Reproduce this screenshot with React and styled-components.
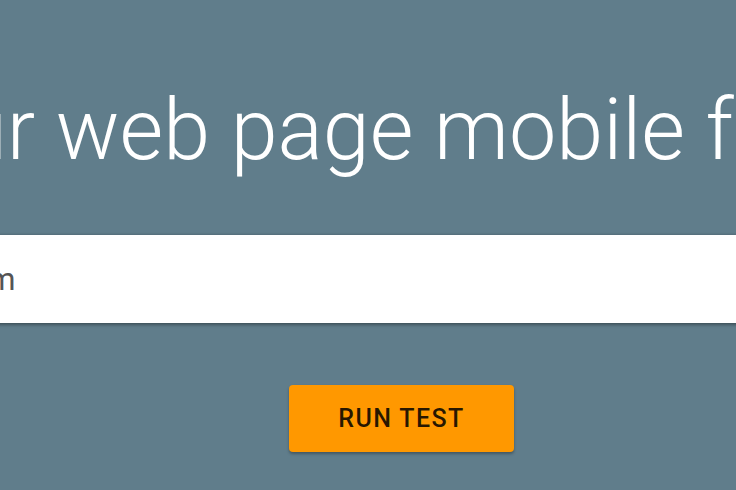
import styled, { createGlobalStyle } from "styled-components";

const GlobalStyle = createGlobalStyle`
  html, body {
    margin: 0;
    padding: 0;
    background-color: #607d8b;
    overflow: hidden;
  }
`;

const App = () => {
  return (
    <>
      <GlobalStyle />
      <Page>
        <Heading>Is your web page mobile friendly?</Heading>
        <UrlInput type="text" defaultValue="https://example.com" />
        <RunButton>RUN TEST</RunButton>
      </Page>
    </>
  );
};

const Page = styled.div`
  display: flex;
  flex-direction: column;
  align-items: center;
  box-sizing: border-box;
  width: 736px;
  height: 490px;
  padding-left: 67px;
  padding-top: 81px;
  overflow: hidden;
  font-family: Roboto, "Liberation Sans", sans-serif;
`;

const Heading = styled.h1`
  margin: 0;
  flex-shrink: 0;
  white-space: nowrap;
  font-size: 84.5px;
  line-height: 100px;
  font-weight: 300;
  color: #ffffff;
`;

const UrlInput = styled.input`
  flex-shrink: 0;
  box-sizing: border-box;
  width: 1600px;
  height: 88px;
  margin-top: 54px;
  padding: 0 0 0 127px;
  border: none;
  outline: none;
  background-color: #ffffff;
  box-shadow: 0 2px 3px rgba(0, 0, 0, 0.35), 0 -1px 2px rgba(0, 0, 0, 0.12);
  font-family: Roboto, "Liberation Sans", sans-serif;
  font-size: 31px;
  color: #555555;
`;

const RunButton = styled.button`
  flex-shrink: 0;
  width: 225px;
  height: 67px;
  margin-top: 62px;
  border: none;
  border-radius: 4px;
  background-color: #ff9800;
  box-shadow: 0 2px 3px rgba(0, 0, 0, 0.3);
  font-family: Roboto, "Liberation Sans", sans-serif;
  font-size: 25px;
  font-weight: 500;
  letter-spacing: 1.4px;
  color: rgba(0, 0, 0, 0.85);
  cursor: pointer;
`;

export default App;
